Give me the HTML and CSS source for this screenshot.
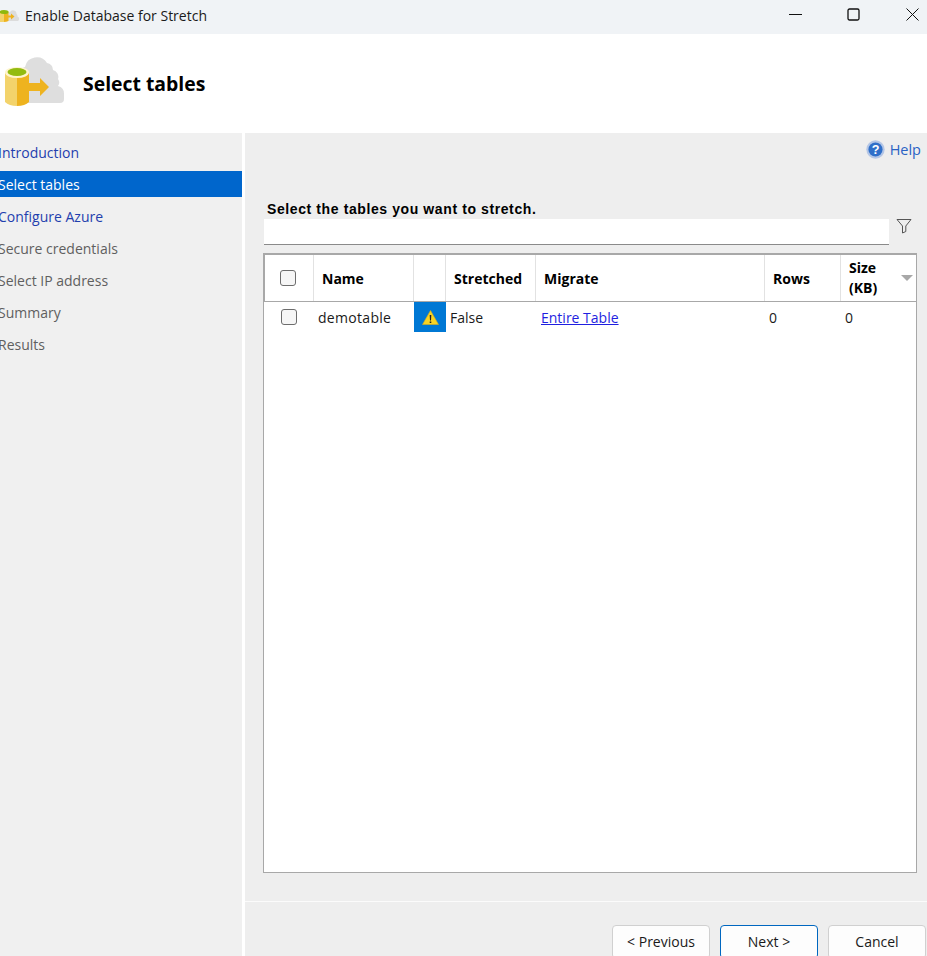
FILE: index.html
```html
<!DOCTYPE html>
<html>
<head>
    <title>Enable Database for Stretch</title>
    <link rel="stylesheet" href="styles.css">
</head>
<body>
    <div class="titlebar">
        <div class="title-left">
            <svg class="title-icon" width="20" height="15" viewBox="0 0 20 15">
                <path d="M7 13V6a4.500 4.500 0 0 1 3-2 3.500 3.500 0 0 1 6.500 2 3 3 0 0 1 1 2.500 2.500 2.500 0 0 1 .5 4.500z" fill="#dcdcdc"/>
                <path d="M0 3.500h4v10.500H0z" fill="#f3d36b"/>
                <path d="M4 3.500h4.500v9.500q-2 1-4.500 1z" fill="#eeb31f"/>
                <ellipse cx="4" cy="4" rx="4.500" ry="2" fill="#8fb80e"/>
                <path d="M8 7.500h3V5.500l3.500 3-3.500 3v-2H8z" fill="#eeb31f"/>
            </svg>
            <span>Enable Database for Stretch</span>
        </div>
        <div class="window-buttons">
            <svg width="13" height="13" viewBox="0 0 13 13"><path d="M0 6.500h13" stroke="#111" stroke-width="1"/></svg>
            <svg width="13" height="13" viewBox="0 0 13 13"><rect x="1" y="1" width="11" height="11" rx="1.500" fill="none" stroke="#111" stroke-width="1.300"/></svg>
            <svg class="close-icon" width="13" height="13" viewBox="0 0 13 13"><path d="M.5 .5l12 12M12.500 .5l-12 12" stroke="#111" stroke-width="1"/></svg>
        </div>
    </div>

    <div class="banner">
        <svg class="banner-icon" width="60" height="50" viewBox="0 0 60 50">
            <path d="M15 46V13a8 8 0 0 1 5-3 12 12 0 0 1 22-4 7 7 0 0 1 6 7 7 7 0 0 1 5 9 6 6 0 0 1 0 7 8 8 0 0 1 6 8v5a4 4 0 0 1-4 4z" fill="#dedede"/>
            <path d="M0 15h12v34q-8 0-12-4z" fill="#f3d36b"/>
            <path d="M12 15h12v30q-4 4-12 4z" fill="#eeb31f"/>
            <ellipse cx="12" cy="15.500" rx="12" ry="5.500" fill="#fff4cc"/>
            <ellipse cx="12" cy="15" rx="9.500" ry="4" fill="#93bb10"/>
            <path d="M24 26h11v-5l9 9-9 9v-5H24z" fill="#eeb31f"/>
        </svg>
        <h1>Select tables</h1>
    </div>

    <div class="main">
        <nav class="sidebar">
            <a class="step link">Introduction</a>
            <a class="step active">Select tables</a>
            <a class="step link">Configure Azure</a>
            <a class="step">Secure credentials</a>
            <a class="step">Select IP address</a>
            <a class="step">Summary</a>
            <a class="step">Results</a>
        </nav>
        <div class="content">
            <div class="help-row">
                <svg width="19" height="19" viewBox="0 0 18 18">
                    <circle cx="9" cy="9" r="8.700" fill="#b4c6e6"/>
                    <circle cx="9" cy="9" r="6.700" fill="#2f6fc9"/>
                    <text x="9" y="13" text-anchor="middle" class="help-mark">?</text>
                </svg>
                <a class="help-link">Help</a>
            </div>
            <div class="prompt">Select the tables you want to stretch.</div>
            <div class="filter-row">
                <div class="filter-input"></div>
                <svg class="filter-icon" width="16" height="16" viewBox="0 0 16 16">
                    <path d="M1 1.500h14L9.800 8v5.500L6.500 15V8z" fill="none" stroke="#555" stroke-width="1"/>
                </svg>
            </div>
            <div class="grid">
                <div class="row head">
                    <div class="cell c-check"><span class="checkbox"></span></div>
                    <div class="cell c-name">Name</div>
                    <div class="cell c-warn"></div>
                    <div class="cell c-stretched">Stretched</div>
                    <div class="cell c-migrate">Migrate</div>
                    <div class="cell c-rows">Rows</div>
                    <div class="cell c-size"><span>Size<br>(KB)</span><i class="sort-arrow"></i></div>
                </div>
                <div class="row body-row">
                    <div class="cell c-check"><span class="checkbox"></span></div>
                    <div class="cell c-name">demotable</div>
                    <div class="cell c-warn warn-on">
                        <svg width="17" height="15" viewBox="0 0 17 15">
                            <path d="M8.500 .5L16.500 14.500H.5z" fill="#f9d423" stroke="#d8ad1c" stroke-width=".6"/>
                            <path d="M7.700 5h1.600l-.3 5.500H8z M7.700 11.500h1.600v1.600H7.700z" fill="#222"/>
                        </svg>
                    </div>
                    <div class="cell c-stretched">False</div>
                    <div class="cell c-migrate"><a class="table-link">Entire Table</a></div>
                    <div class="cell c-rows">0</div>
                    <div class="cell c-size">0</div>
                </div>
            </div>
            <div class="footer">
                <button class="btn">&lt; Previous</button>
                <button class="btn primary">Next &gt;</button>
                <button class="btn">Cancel</button>
            </div>
        </div>
    </div>
</body>
</html>
```

FILE: styles.css
```css
html, body {
    margin: 0;
    height: 956px;
    overflow: hidden;
}
body {
    font-family: "Open Sans", "Noto Sans", sans-serif;
    font-size: 14px;
    color: #1a1a1a;
    background-color: white;
    display: flex;
    flex-direction: column;
}
.titlebar {
    height: 34px;
    flex: none;
    background-color: #f0f3f6;
    display: flex;
    justify-content: space-between;
    align-items: center;
}
.title-left {
    display: flex;
    align-items: center;
    gap: 5px;
    font-size: 14px;
    margin-top: -3px;
}
.title-icon {
    display: block;
}
.window-buttons {
    display: flex;
    gap: 45px;
    margin-right: 8px;
    margin-top: -5px;
}
.window-buttons svg {
    display: block;
}
.window-buttons .close-icon {
    margin-left: 1px;
}
.banner {
    height: 99px;
    flex: none;
    display: flex;
    align-items: center;
    padding-left: 5px;
}
.banner-icon {
    display: block;
    margin-top: -3px;
}
.banner h1 {
    margin: 0 0 0 18px;
    font-size: 19.4px;
    font-weight: 700;
    color: black;
}
.main {
    flex: 1;
    display: flex;
    gap: 3px;
    min-height: 0;
}
.sidebar {
    width: 242px;
    background-color: #f0f0f0;
    padding-top: 6px;
    display: flex;
    flex-direction: column;
    gap: 6px;
}
.step {
    height: 26px;
    line-height: 27px;
    text-indent: -2px;
    color: #5f5f5f;
}
.step.link {
    color: #1f3fae;
}
.step.active {
    background-color: #0066cc;
    color: white;
}
.content {
    flex: 1;
    background-color: #eeeeee;
    display: flex;
    flex-direction: column;
    padding-left: 19px;
    min-width: 0;
}
.content > * {
    flex: none;
}
.help-row {
    display: flex;
    justify-content: flex-end;
    align-items: center;
    gap: 5px;
    height: 18px;
    margin-top: 7px;
    padding-right: 6px;
}
.help-row svg {
    display: block;
}
.help-mark {
    font-family: "Liberation Sans", sans-serif;
    font-size: 12px;
    font-weight: 700;
    fill: white;
}
.help-link {
    color: #2a62c4;
    font-size: 14.5px;
}
.prompt {
    margin: 42px 0 0 3px;
    font-family: "Liberation Sans", sans-serif;
    font-size: 14px;
    font-weight: 700;
    letter-spacing: .6px;
    line-height: 18px;
    color: black;
}
.filter-row {
    display: flex;
    align-items: flex-start;
    margin-top: 1px;
}
.filter-input {
    width: 625px;
    height: 25px;
    background-color: white;
    border-bottom: 1px solid #8a8a8a;
}
.filter-icon {
    display: block;
    margin: -1px 0 0 7px;
}
.grid {
    width: 654px;
    height: 620px;
    margin: 8px 0 0 -1px;
    background-color: white;
    border: 1px solid #a8a8a8;
    border-top-width: 2px;
    box-sizing: border-box;
}
.row {
    display: flex;
}
.row.head {
    height: 46px;
    font-weight: 700;
    color: black;
    border-left: 2px solid #a8a8a8;
    border-bottom: 1px solid #a8a8a8;
    margin-left: -1px;
    box-sizing: content-box;
}
.row.body-row {
    height: 30px;
}
.cell {
    display: flex;
    align-items: center;
    padding-left: 8px;
    box-sizing: border-box;
    flex: none;
}
.head .cell {
    border-right: 1px solid #e2e2e2;
}
.head .cell:last-child {
    border-right: none;
}
.c-check {
    width: 49px;
    padding-left: 15px;
}
.c-name {
    width: 100px;
}
.c-warn {
    width: 32px;
    padding-left: 0;
}
.c-stretched {
    width: 90px;
}
.c-migrate {
    width: 229px;
}
.c-rows {
    width: 76px;
}
.c-size {
    width: 76px;
    justify-content: space-between;
    padding-right: 4px;
}
.head .c-size {
    line-height: 20px;
}
.body-row .cell {
    font-weight: 400;
    padding-left: 5px;
    color: #1a1a1a;
}
.body-row .c-check {
    width: 50px;
    padding-left: 17px;
}
.body-row .c-name {
    padding-left: 4px;
    letter-spacing: .3px;
}
.body-row .c-warn {
    background-color: #0078d4;
    justify-content: center;
    padding-left: 0;
}
.body-row .c-stretched {
    padding-left: 4px;
}
.body-row .c-rows, .body-row .c-size {
    padding-left: 4px;
}
.checkbox {
    display: block;
    width: 16px;
    height: 16px;
    box-sizing: border-box;
    border: 1px solid #6d6d6d;
    border-radius: 3px;
    background-color: #f6f6f6;
}
.sort-arrow {
    width: 0;
    height: 0;
    border-left: 6px solid transparent;
    border-right: 6px solid transparent;
    border-top: 6px solid #a8a8a8;
}
.table-link {
    color: #1f1fe0;
    text-decoration: underline;
}
.footer {
    margin: 28px 0 0 -19px;
    border-top: 1px solid #fbfbfb;
    padding: 23px 1px 0 0;
    display: flex;
    justify-content: flex-end;
    gap: 10px;
}
.btn {
    width: 98px;
    height: 34px;
    flex: none;
    font-family: inherit;
    font-size: 14px;
    color: #1a1a1a;
    background-color: #fdfdfd;
    border: 1px solid #d0d0d0;
    border-radius: 4px;
    padding: 0 0 2px;
}
.btn.primary {
    border-color: #0067c0;
}
```
